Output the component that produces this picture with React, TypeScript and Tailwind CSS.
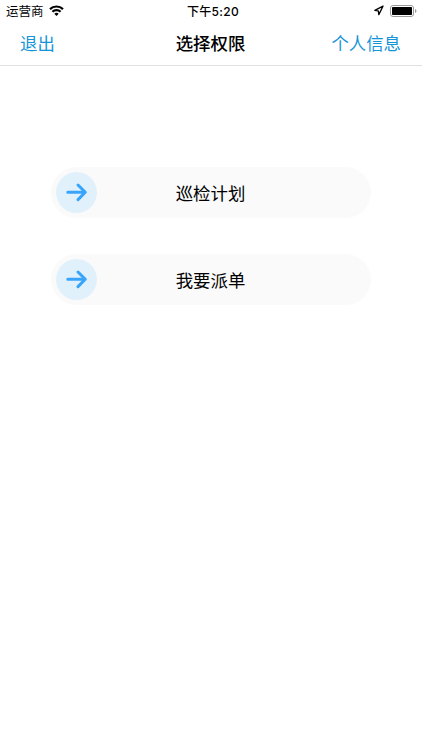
const font = "font-['Inter','Noto_Sans_CJK_SC',sans-serif]";

function StatusBar() {
  return (
    <div className="relative flex h-[21px] items-center justify-between pl-[6px] pr-[5px] text-[12px] leading-[23px]">
      <div className="flex items-center gap-[5px]">
        <span className="pt-px text-[12.5px]">运营商</span>
        <svg width="15" height="11" viewBox="0 0 15 11" fill="none" stroke="#000" strokeWidth="2.2">
          <path d="M1 4.1 A9.4 9.4 0 0 1 14 4.1" />
          <path d="M3.4 6.8 A5.8 5.8 0 0 1 11.6 6.8" />
          <path d="M7.5 11 L5.3 8.8 A3.1 3.1 0 0 1 9.7 8.8 Z" fill="#000" stroke="none" />
        </svg>
      </div>
      <span className="absolute left-[187px] top-0 font-medium tracking-[0.3px]">下午5:20</span>
      <div className="flex items-center gap-[6px]">
        <svg width="11" height="11" viewBox="0 0 11 11" fill="none" stroke="#000" strokeWidth="1.3" strokeLinejoin="round">
          <path d="M10 1.2 L1.8 5.3 L5.3 5.8 L5.8 9.6 Z" />
        </svg>
        <svg width="27" height="12" viewBox="0 0 27 12">
          <rect x="0.5" y="0.5" width="23" height="11" rx="2.5" fill="none" stroke="#999" />
          <rect x="2" y="2" width="20" height="8" rx="0.8" />
          <path d="M25 4 Q26.5 4.7 26.5 6 Q26.5 7.3 25 8 Z" fill="#999" />
        </svg>
      </div>
    </div>
  );
}

function Option({ label }: { label: string }) {
  return (
    <button className="relative flex h-[51px] w-full items-center justify-center rounded-full bg-[#fafafa] pr-px pt-[3px] text-[17.4px]">
      <span className="absolute left-[5px] top-[5px] flex size-[41px] items-center justify-center rounded-full bg-[#e1f1fc]">
        <svg width="23" height="21" viewBox="0 0 23 21" fill="none" stroke="#38a5fa" strokeWidth="3" strokeLinecap="round" strokeLinejoin="round">
          <path d="M2.8 10.3 H20.2 M13 3 L20.3 10.3 L13 17.6" />
        </svg>
      </span>
      {label}
    </button>
  );
}

export default function App() {
  return (
    <main className={`h-[750px] w-[422px] overflow-hidden bg-white text-black ${font}`}>
      <StatusBar />
      <header className="grid h-[45px] grid-cols-3 items-center border-b border-[#e0e0e0] pl-[20px] pr-[21px] pt-[2px] text-[17.4px]">
        <button className="text-left text-[#1694d8]">退出</button>
        <h1 className="text-center font-medium">选择权限</h1>
        <button className="text-right text-[#1694d8]">个人信息</button>
      </header>
      <div className="flex flex-col gap-[36px] px-[51px] pt-[101px]">
        <Option label="巡检计划" />
        <Option label="我要派单" />
      </div>
    </main>
  );
}
